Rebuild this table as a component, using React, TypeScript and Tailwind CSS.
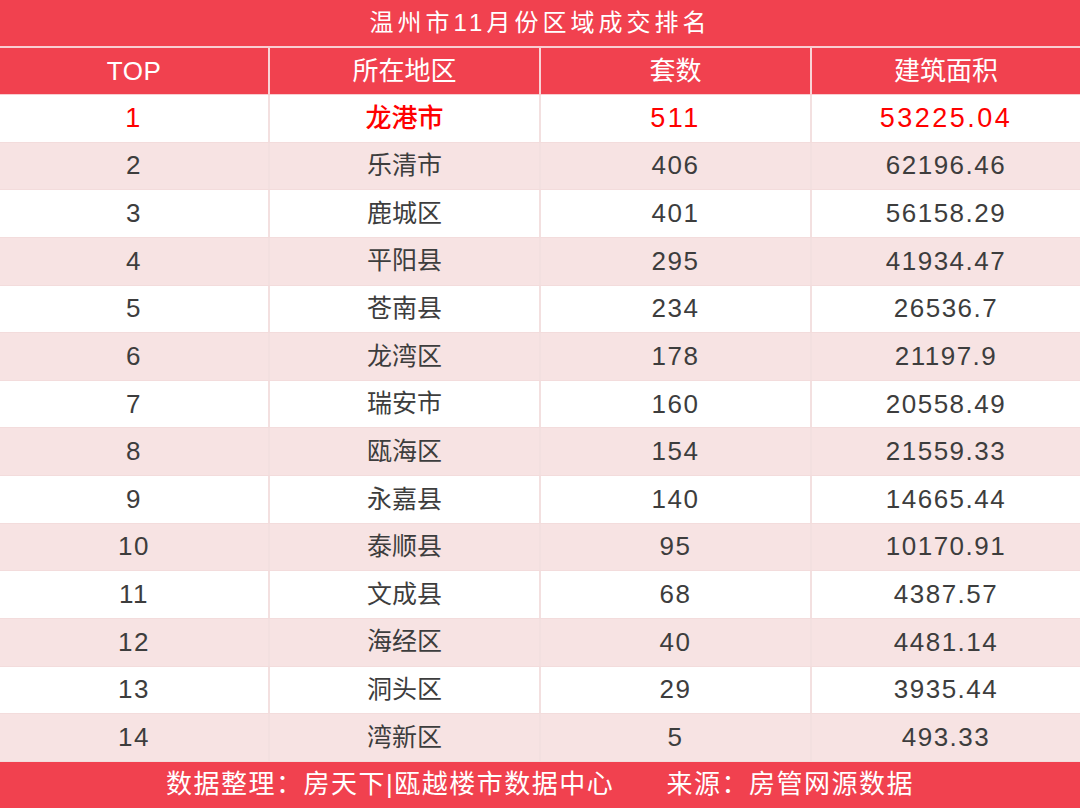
import React from "react";

interface Row {
  rank: number;
  area: string;
  count: string;
  size: string;
}

const rows: Row[] = [
  { rank: 1, area: "龙港市", count: "511", size: "53225.04" },
  { rank: 2, area: "乐清市", count: "406", size: "62196.46" },
  { rank: 3, area: "鹿城区", count: "401", size: "56158.29" },
  { rank: 4, area: "平阳县", count: "295", size: "41934.47" },
  { rank: 5, area: "苍南县", count: "234", size: "26536.7" },
  { rank: 6, area: "龙湾区", count: "178", size: "21197.9" },
  { rank: 7, area: "瑞安市", count: "160", size: "20558.49" },
  { rank: 8, area: "瓯海区", count: "154", size: "21559.33" },
  { rank: 9, area: "永嘉县", count: "140", size: "14665.44" },
  { rank: 10, area: "泰顺县", count: "95", size: "10170.91" },
  { rank: 11, area: "文成县", count: "68", size: "4387.57" },
  { rank: 12, area: "海经区", count: "40", size: "4481.14" },
  { rank: 13, area: "洞头区", count: "29", size: "3935.44" },
  { rank: 14, area: "湾新区", count: "5", size: "493.33" },
];

const App = () => {
  return (
    <div className="w-[1080px] h-[808px] bg-white font-['Liberation_Sans','Noto_Sans_CJK_SC',sans-serif] flex flex-col overflow-hidden">
      {/* title */}
      <div className="h-[46px] bg-[#f1414f] text-white text-[24px] tracking-[4px] flex items-center justify-center">
        温州市11月份区域成交排名
      </div>

      {/* header */}
      <div className="h-[49px] bg-[#f1414f] border-t-2 border-b border-[#f9cdd1] grid grid-cols-[268px_271px_271px_1fr] text-white text-[26px]">
        <div className="flex items-center justify-center tracking-[0.5px]">TOP</div>
        <div className="flex items-center justify-center border-l-2 border-[#f9d3d6]">所在地区</div>
        <div className="flex items-center justify-center border-l-2 border-[#f9d3d6]">套数</div>
        <div className="flex items-center justify-center border-l-2 border-[#f9d3d6]">建筑面积</div>
      </div>

      {/* body */}
      <div className="flex flex-col">
        {rows.map((r, i) => {
          const top = i === 0;
          const bg = i % 2 === 0 ? "bg-white" : "bg-[#f7e3e3]";
          const color = top ? "text-[#ff0000] font-medium" : "text-[#3d3d3d]";
          const num = top ? "text-[27px] tracking-[2.5px]" : "text-[26px] tracking-[1.5px]";
          return (
            <div
              key={r.rank}
              className={`h-[47.64px] grid grid-cols-[268px_271px_271px_1fr] border-b border-[#f3dcdc] ${bg} ${color}`}
            >
              <div className={`flex items-center justify-center ${num}`}>{r.rank}</div>
              <div className={`flex items-center justify-center border-l-2 border-[#f3e0e0] ${top ? "text-[26px]" : "text-[25px]"}`}>
                {r.area}
              </div>
              <div className={`flex items-center justify-center border-l-2 border-[#f3e0e0] ${num}`}>{r.count}</div>
              <div className={`flex items-center justify-center border-l-2 border-[#f3e0e0] ${num}`}>{r.size}</div>
            </div>
          );
        })}
      </div>

      {/* footer */}
      <div className="h-[46px] bg-[#f1414f] text-white text-[26px] tracking-[1.5px] flex items-center justify-center gap-[52px]">
        <span>数据整理：房天下|瓯越楼市数据中心</span>
        <span>来源：房管网源数据</span>
      </div>
    </div>
  );
};

export default App;
